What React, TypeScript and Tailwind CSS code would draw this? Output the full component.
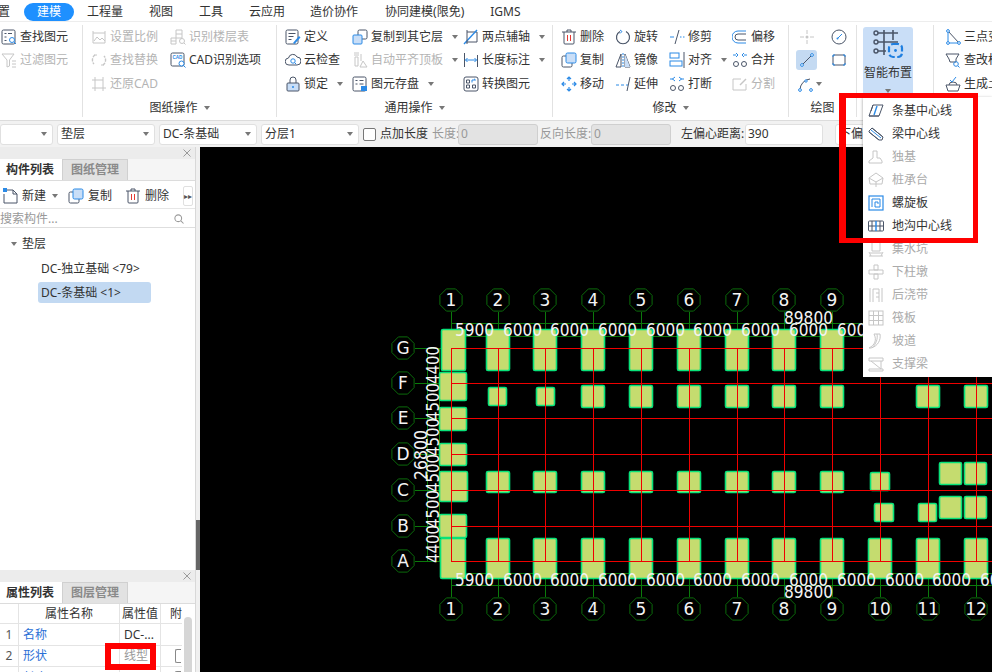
import type { ReactNode } from "react";

const G = "#4a5568";
const B = "#2b8ae6";
const L = "#c9def7";
const D = "#c6c6c6";

const ICONS: Record<string, ReactNode> = {
  find: (<><rect x="1" y="1" width="13" height="14" rx="1.5" stroke={G} /><path d="M3.5 4.5h2M7 4.5h4M3.5 8h2M3.5 11.5h2" stroke={G} /><circle cx="11" cy="11" r="2.5" stroke={B} fill="#fff" /><path d="M13 13l2 2" stroke={B} /></>),
  filter: (<><path d="M1 2h12L8.5 8v6L6 15V8z" stroke={D} /><path d="M11 9h4M11 12h4M11 15h4" stroke={D} /></>),
  scale: (<><path d="M2 2v12h12V2M2 4h12" stroke={D} /><path d="M3 12l3-4 3 3 2-2 3 3" stroke={D} /></>),
  replace: (<><path d="M4 3a6 6 0 0 0-1 9M12 13a6 6 0 0 0 1-9" stroke={D} strokeWidth="1.4" strokeDasharray="3 1" /><path d="M3 3h3M13 13h-3" stroke={D} /></>),
  restore: (<><path d="M4 1v14M1 12h14M12 1v11M4 4h8" stroke={D} /><path d="M1 4h3M12 15v-3" stroke={D} /></>),
  floor: (<><path d="M1 9h5v6H1zM6 1h6v8H6zM6 5h6M1 12h5" stroke={D} /><circle cx="12" cy="12" r="2.5" stroke={D} /><path d="M14 14l1.5 1.5" stroke={D} /></>),
  cad: (<><rect x="1" y="1" width="13" height="13" rx="1.5" stroke={G} /><text x="2.4" y="7" fontSize="4.6" fontWeight="700" fill={B} fontFamily="Liberation Sans">CAD</text><circle cx="11.5" cy="11.5" r="2.5" stroke={B} fill="#fff" /><path d="M13.5 13.5l2 2" stroke={B} /></>),
  define: (<><rect x="1" y="1" width="12" height="14" rx="1.5" stroke={G} /><path d="M3.5 4.5h7M3.5 7.5h5M3.5 10.5h3" stroke={G} /><path d="M8 14l6-7 1.5 1.5L9.5 15z" fill={B} /></>),
  cloud: (<><path d="M4 13a3.5 3.5 0 0 1-.5-7A4.500 4.500 0 0 1 12 5a4 4 0 0 1 0 8z" stroke={G} /><circle cx="8" cy="9" r="2.2" stroke={B} /><path d="M9.6 10.6l1.6 1.6" stroke={B} /></>),
  lock: (<><rect x="2" y="7" width="12" height="8" rx="1" stroke={G} fill={L} /><path d="M5 7V4a3 3 0 0 1 6 0v3" stroke={G} /><circle cx="8" cy="11" r="1" fill={B} /></>),
  copyto: (<><rect x="6" y="1" width="9" height="9" rx="1.5" stroke={G} fill="#fff" /><rect x="1" y="6" width="9" height="9" rx="1" stroke={B} fill={L} /></>),
  auto: (<><path d="M2 1h5M2 3h5M3 5h3v9H3zM9 2v7M8 15l3-6 4 6z" stroke={D} /></>),
  save: (<><rect x="1" y="1" width="13" height="14" rx="1.5" stroke={G} /><path d="M3.5 4.5h2M7.5 4.5h4M3.5 8h2M7.5 8h4" stroke={G} /><rect x="9" y="10" width="6" height="5" fill={B} /></>),
  axis: (<><path d="M4 3h10v10H3" stroke={G} /><path d="M1 15L14 1" stroke={B} strokeWidth="1.4" /><path d="M4 1v14" stroke={G} /></>),
  dim: (<><path d="M1.500 1v14M14.500 3v12" stroke={G} /><path d="M2.500 8h11M4.500 6l-2 2 2 2M11.500 6l2 2-2 2" stroke={B} /></>),
  convert: (<><rect x="1" y="1" width="14" height="14" rx="2" stroke={G} /><path d="M3.500 4h3v3h-3zM9.500 9h3v3h-3zM3.500 9h3v3h-3z" stroke={G} /><path d="M9 6.500V4h3.500M12.500 4L11 2.800" stroke={B} /></>),
  del: (<><path d="M1 3h14M6 3V1h4v2M3 3v11a1 1 0 0 0 1 1h8a1 1 0 0 0 1-1V3" stroke={G} /><path d="M6.500 6v6M9.500 6v6" stroke="#e53935" /></>),
  copy: (<><rect x="1" y="4" width="10" height="11" rx="1.5" stroke={G} /><rect x="5" y="1" width="10" height="10" rx="1.5" stroke={B} fill={L} /></>),
  move: (<><path d="M8 1v4M8 11v4M1 8h4M11 8h4M6 3l2-2 2 2M6 13l2 2 2-2M3 6L1 8l2 2M13 6l2 2-2 2" stroke={B} strokeWidth="1.2" /></>),
  rotate: (<><path d="M11 2.500A6.500 6.500 0 1 1 5 2.500" stroke={G} strokeWidth="1.2" /><path d="M5 1l2 1.500L5 4.500" stroke={B} /></>),
  mirror: (<><path d="M6 2L1 15h5zM10 2l5 13h-5z" stroke={G} /><path d="M10 2l5 13h-5z" fill={L} /><path d="M8 1v14" stroke={B} strokeDasharray="2 1" /></>),
  extend: (<><path d="M1 9h3M6 9h3M11 9h2" stroke={B} /><path d="M12 15l3-14" stroke={G} /></>),
  trim: (<><path d="M1 8h4M11 8h1.500M14 8h1.500" stroke={B} /><path d="M6 15L10 1" stroke={G} /></>),
  align: (<><rect x="1" y="1" width="9" height="5" stroke={B} /><rect x="1" y="9" width="12" height="5" stroke={B} /><path d="M15 0v16" stroke={G} /></>),
  break: (<><circle cx="4" cy="12" r="2.5" stroke={G} /><circle cx="12" cy="12" r="2.5" stroke={G} /><path d="M6 5L3.500 3 6 1M1 3h3M10 5l2.500-2L10 1M15 3h-3" stroke={B} /></>),
  offset: (<><path d="M14 2H6a5.500 5.500 0 0 0 0 12h8" stroke={B} /><path d="M14 5H6a3 3 0 0 0 0 6h8" stroke={G} /></>),
  merge: (<><circle cx="4" cy="12" r="2.5" stroke={G} /><circle cx="12" cy="12" r="2.5" stroke={G} /><path d="M1 3h3M4 1l2 2-2 2M15 3h-3M12 1l-2 2 2 2" stroke={B} /></>),
  split: (<><path d="M9 3H1v11h13V8" stroke={D} /><path d="M8 9l6-6" stroke={D} strokeWidth="1.5" /></>),
  point: (<><path d="M8 1v4M8 11v4M1 8h4M11 8h4" stroke={D} /><circle cx="8" cy="8" r="1.5" fill={D} /></>),
  gauge: (<><circle cx="8" cy="8" r="7" stroke={G} /><path d="M6.500 9.500L11 5" stroke={B} /><circle cx="6.500" cy="9.500" r="1" fill={B} /></>),
  line: (<><path d="M3 13L13 3" stroke={G} /><circle cx="3" cy="13" r="1.4" stroke={B} fill="#fff" /><circle cx="13" cy="3" r="1.4" stroke={B} fill="#fff" /></>),
  rect: (<><rect x="2" y="3" width="12" height="10" rx="1" stroke={G} /><path d="M2 5V3h2M12 3h2v2M2 11v2h2M12 13h2v-2" stroke={B} /></>),
  arc: (<><path d="M3 14A11 11 0 0 1 13 3" stroke={G} /><circle cx="3" cy="14" r="1.4" stroke={B} fill="#fff" /><circle cx="9" cy="5" r="1.2" stroke={B} fill="#fff" /><circle cx="14" cy="14" r="1.4" stroke={B} fill="#fff" /></>),
  tri: (<><path d="M3 2v12h11" stroke={B} /><path d="M3 2l11 12" stroke={G} /><circle cx="3" cy="2" r="1.4" fill="#fff" stroke={B} /><circle cx="3" cy="14" r="1.4" fill="#fff" stroke={B} /><circle cx="14" cy="14" r="1.4" fill="#fff" stroke={B} /></>),
  funnel: (<><path d="M1 2h13l-3 5v3H5L4 7z" stroke={G} /><circle cx="11" cy="12" r="2.3" stroke={B} /><path d="M13 14l1.500 1.500" stroke={B} /></>),
  gen: (<><path d="M1 9h14l-2 6H3z" stroke={G} /><path d="M4 9a4 3 0 0 1 8 0" stroke={G} /><path d="M5 4l2 2 4-5" stroke={B} /></>),
  newdoc: (<><path d="M4 2h7l4 4v9H2V6" stroke={G} /><path d="M11 2v4h4" stroke={G} /><rect x="1" y="0" width="4" height="4" fill={B} /></>),
  search: (<><circle cx="7" cy="7" r="4.500" stroke="#999" strokeWidth="1.4" /><path d="M10.500 10.500L14 14" stroke="#999" strokeWidth="1.4" /></>),
  mStrip: (<><path d="M5 2h10l-4 11H1z" stroke={G} /><path d="M1 13h10M5 2L3 8" stroke={G} /><path d="M9 3L6 12" stroke={B} strokeWidth="1.4" /></>),
  mBeam: (<><path d="M1 5l3-3 11 9-1 3h-3L1 6z" stroke={G} /><path d="M1 6l10 8M4 2l11 9" stroke={G} /><path d="M3 4l10 8" stroke={B} /></>),
  mBase: (<><path d="M5 2h4v7h3l2 3v2H1v-2l4-3z" stroke={D} /></>),
  mPile: (<><path d="M8 1l7 5-1 6H2L1 6z" stroke={D} /><path d="M1 6l7 4 7-4M8 10v5" stroke={D} /></>),
  mSpiral: (<><rect x="1" y="1" width="14" height="14" stroke={B} strokeWidth="1.2" /><path d="M4 12V4h8v8H7V7h3v2" stroke={B} /></>),
  mDitch: (<><rect x="0.500" y="3" width="15" height="10" rx="1" stroke={G} /><path d="M0.500 8h15M4 3v10M12 3v10" stroke={G} /><path d="M8 3v10" stroke={B} strokeWidth="1.5" /></>),
  mPit: (<><path d="M4 1v9h8V1M1 15h14M2 12h12" stroke={D} /><path d="M1 11l2 4M15 11l-2 4" stroke={D} /></>),
  mPier: (<><path d="M6 1h4v5h-4zM1 6h14v4H1zM6 10h4v5H6z" stroke={D} /></>),
  mBand: (<><path d="M2 1v14M14 1v14M5 2h6v13M5 2v13M8 6h3M8 10h3" stroke={D} /></>),
  mRaft: (<><rect x="1" y="1" width="14" height="14" stroke={D} /><path d="M1 5.500h14M1 10.500h14M5.500 1v14M10.500 1v14" stroke={D} /></>),
  mRamp: (<><path d="M6 1h6C13 7 10 13 3 15H1C7 12 9 7 6 1zM9 1c1 5-1 10-5 14" stroke={D} /></>),
  mBrace: (<><path d="M1 2h14v3H1zM3 5l10 8M13 5v8M1 13h14v2H1z" stroke={D} /></>),
};

function Ico({ name, size = 16 }: { name: string; size?: number }) {
  return (
    <svg width={size} height={size} viewBox="0 0 16 16" fill="none" className="shrink-0">
      {ICONS[name]}
    </svg>
  );
}

function Caret({ className = "ml-[6px]" }: { className?: string }) {
  return <span className={`inline-block h-0 w-0 shrink-0 border-x-[3px] border-t-[4px] border-x-transparent border-t-[#777] ${className}`} />;
}

function Item({ icon, label, off, caret }: { icon: string; label: string; off?: boolean; caret?: boolean }) {
  return (
    <div className={`flex h-[23.5px] items-center gap-[3px] whitespace-nowrap ${off ? "text-[#b4b4b4]" : "text-[#333]"}`}>
      <Ico name={icon} />
      <span>{label}</span>
      {caret && <Caret />}
    </div>
  );
}

function GroupTitle({ label, caret = true }: { label: string; caret?: boolean }) {
  return (
    <div className="mt-[1px] flex h-[22px] items-center justify-center text-[#333]">
      {label}
      {caret && <Caret className="ml-[6px]" />}
    </div>
  );
}

function Ribbon() {
  return (
    <div className="flex h-[98px] shrink-0 bg-white pt-[3px] text-[12px]">
      <div className="mb-[3px] w-[83px] shrink-0 border-r border-[#e2e2e2] pl-[1px]">
        <Item icon="find" label="查找图元" />
        <Item icon="filter" label="过滤图元" off />
      </div>

      <div className="mb-[3px] w-[194px] shrink-0 border-r border-[#e2e2e2]">
        <div className="flex h-[70.5px] pl-[8px]">
          <div className="w-[79px]">
            <Item icon="scale" label="设置比例" off />
            <Item icon="replace" label="查找替换" off />
            <Item icon="restore" label="还原CAD" off />
          </div>
          <div>
            <Item icon="floor" label="识别楼层表" off />
            <Item icon="cad" label="CAD识别选项" />
          </div>
        </div>
        <GroupTitle label="图纸操作" />
      </div>

      <div className="mb-[3px] w-[276px] shrink-0 border-r border-[#e2e2e2]">
        <div className="flex h-[70.5px] pl-[8px]">
          <div className="w-[67px]">
            <Item icon="define" label="定义" />
            <Item icon="cloud" label="云检查" />
            <Item icon="lock" label="锁定" caret />
          </div>
          <div className="w-[111px]">
            <Item icon="copyto" label="复制到其它层" caret />
            <Item icon="auto" label="自动平齐顶板" caret off />
            <Item icon="save" label="图元存盘" caret />
          </div>
          <div>
            <Item icon="axis" label="两点辅轴" caret />
            <Item icon="dim" label="长度标注" caret />
            <Item icon="convert" label="转换图元" />
          </div>
        </div>
        <GroupTitle label="通用操作" />
      </div>

      <div className="mb-[3px] w-[236px] shrink-0 border-r border-[#e2e2e2]">
        <div className="flex h-[70.5px] pl-[8px]">
          <div className="w-[54px]">
            <Item icon="del" label="删除" />
            <Item icon="copy" label="复制" />
            <Item icon="move" label="移动" />
          </div>
          <div className="w-[54px]">
            <Item icon="rotate" label="旋转" />
            <Item icon="mirror" label="镜像" />
            <Item icon="extend" label="延伸" />
          </div>
          <div className="w-[63px]">
            <Item icon="trim" label="修剪" />
            <Item icon="align" label="对齐" caret />
            <Item icon="break" label="打断" />
          </div>
          <div>
            <Item icon="offset" label="偏移" />
            <Item icon="merge" label="合并" />
            <Item icon="split" label="分割" off />
          </div>
        </div>
        <GroupTitle label="修改" />
      </div>

      <div className="mb-[3px] w-[68px] shrink-0 border-r border-[#e2e2e2]">
        <div className="grid h-[70.5px] grid-cols-[32px_32px] grid-rows-3 justify-center">
          <div className="flex items-center justify-center"><Ico name="point" /></div>
          <div className="flex items-center justify-center"><Ico name="gauge" /></div>
          <div className="flex items-center justify-center">
            <div className="flex h-[20px] w-[21px] items-center justify-center rounded-[3px] bg-[#c4daf2]"><Ico name="line" /></div>
          </div>
          <div className="flex items-center justify-center"><Ico name="rect" /></div>
          <div className="flex items-center justify-center gap-[3px] pl-[6px]"><Ico name="arc" /><Caret className="" /></div>
        </div>
        <GroupTitle label="绘图" caret={false} />
      </div>

      <div className="mb-[3px] w-[77px] shrink-0 border-r border-[#e2e2e2] pl-[6px]">
        <div className="mt-[2px] flex h-[70px] w-[50px] flex-col items-center rounded-[3px] bg-[#c9def7]">
          <svg width="32" height="32" viewBox="0 0 32 32" fill="none" className="mt-[2px]">
            <path d="M4 4h22M4 13h22M4 22h10M12 1v25M21 1v10" stroke={G} strokeWidth="1.6" />
            <circle cx="4" cy="4" r="2" fill="#c9def7" stroke={G} strokeWidth="1.4" />
            <circle cx="4" cy="13" r="2" fill="#c9def7" stroke={G} strokeWidth="1.4" />
            <circle cx="4" cy="22" r="2" fill="#c9def7" stroke={G} strokeWidth="1.4" />
            <rect x="17" y="15" width="13" height="13" rx="4" stroke="#1f7fe0" strokeWidth="2.2" strokeDasharray="6 2.5" />
            <circle cx="23.5" cy="21.5" r="1.4" fill="#1f7fe0" />
          </svg>
          <span className="mt-[3px] whitespace-nowrap text-[#333]">智能布置</span>
          <Caret className="mt-[7px]" />
        </div>
      </div>

      <div className="flex-1 overflow-hidden pl-[11px]">
        <Item icon="tri" label="三点变" />
        <Item icon="funnel" label="查改标" />
        <Item icon="gen" label="生成土" />
      </div>
    </div>
  );
}

function Select({ w, label }: { w: string; label?: string }) {
  return (
    <div className={`flex h-[21px] shrink-0 items-center justify-between rounded-[3px] border border-[#e0e0e0] bg-white pl-[3px] pr-[5px] text-[#333] ${w}`}>
      <span>{label}</span>
      <Caret className="" />
    </div>
  );
}

function Toolbar() {
  return (
    <div className="flex h-[27px] shrink-0 items-center overflow-hidden whitespace-nowrap border-t border-[#dcdcdc] bg-[#f2f2f2] text-[12px]">
      <div className="flex gap-[4px]">
        <Select w="w-[53px]" />
        <Select w="w-[98px]" label="垫层" />
        <Select w="w-[98px]" label="DC-条基础" />
        <Select w="w-[98px]" label="分层1" />
      </div>
      <span className="ml-[4px] h-[13px] w-[13px] shrink-0 rounded-[2px] border border-[#777] bg-white" />
      <span className="ml-[4px] w-[49px] shrink-0 text-[#333]">点加长度</span>
      <span className="ml-[3px] w-[26px] shrink-0 text-[#999]">长度:</span>
      <div className="flex h-[21px] w-[80px] shrink-0 items-center rounded-[3px] border border-[#cfcfcf] bg-[#e3e3e3] pl-[2px] text-[#999]">0</div>
      <span className="ml-[2px] w-[51px] shrink-0 text-[#999]">反向长度:</span>
      <div className="flex h-[21px] w-[80px] shrink-0 items-center rounded-[3px] border border-[#cfcfcf] bg-[#e3e3e3] pl-[2px] text-[#999]">0</div>
      <span className="ml-[10px] w-[64px] shrink-0 text-[#333]">左偏心距离:</span>
      <div className="flex h-[21px] w-[78px] shrink-0 items-center rounded-[3px] border border-[#e0e0e0] bg-white pl-[2px] text-[#333]">390</div>
      <div className="ml-[12px] flex h-[21px] w-[120px] shrink-0 items-center rounded-[3px] border border-[#e0e0e0] bg-white pl-[3px] text-[#333]">下偏心距离</div>
    </div>
  );
}

function CloseBar() {
  return (
    <div className="flex h-[12px] shrink-0 items-center justify-end bg-[#ececec] pr-[4px]">
      <svg width="8" height="8" viewBox="0 0 8 8"><path d="M0.5 0.5l7 7M7.5 0.5l-7 7" stroke="#9a9a9a" /></svg>
    </div>
  );
}

function PanelTabs({ a, b }: { a: string; b: string }) {
  return (
    <div className="flex h-[22px] shrink-0 border-b border-[#dcdcdc] bg-[#f5f5f5] text-[12px]">
      <div className="flex w-[62px] items-center bg-white pl-[6px] font-bold text-[#333]">{a}</div>
      <div className="flex w-[66px] items-center justify-center border border-b-0 border-[#d0d0d0] bg-[#e2e2e2] font-bold text-[#8a8a8a]">{b}</div>
    </div>
  );
}

function LeftPanel() {
  return (
    <div className="flex w-[196px] shrink-0 flex-col border-r border-[#d8d8d8] bg-white text-[12px]">
      <div className="flex min-h-0 flex-1 flex-col">
        <CloseBar />
        <PanelTabs a="构件列表" b="图纸管理" />
        <div className="flex h-[28px] shrink-0 items-center border-b border-[#e6e6e6] pl-[2px] pt-[2px] text-[#333]">
          <Ico name="newdoc" />
          <span className="ml-[4px]">新建</span>
          <Caret className="ml-[6px]" />
          <span className="ml-[10px]"><Ico name="copy" /></span>
          <span className="ml-[4px]">复制</span>
          <span className="ml-[13px]"><Ico name="del" /></span>
          <span className="ml-[4px]">删除</span>
          <span className="ml-[14px] flex h-[20px] w-[10px] items-center justify-center rounded-[2px] border border-[#e0e0e0] text-[8px] text-[#555]">▸▸</span>
        </div>
        <div className="flex h-[19px] shrink-0 items-center justify-between border-b border-[#dedede] pr-[10px] pt-[2px] text-[#999]">
          <span>搜索构件...</span>
          <Ico name="search" size={12} />
        </div>
        <div className="flex items-center pl-[11px] pt-[7px] text-[#333]">
          <Caret className="mr-[5px]" />
          <span className="leading-[18px]">垫层</span>
        </div>
        <div className="mt-[7px] pl-[41px] leading-[18px] text-[#333]">DC-独立基础 &lt;79&gt;</div>
        <div className="ml-[38px] mt-[4px] flex h-[21px] w-[113px] items-center rounded-[3px] bg-[#c2d9f2] pl-[3px] text-[#333]">DC-条基础 &lt;1&gt;</div>
      </div>

      <div className="relative flex h-[102px] shrink-0 flex-col overflow-hidden">
        <CloseBar />
        <PanelTabs a="属性列表" b="图层管理" />
        <div className="grid grid-cols-[19px_101px_41px_21px] grid-rows-[20px_22px_21px_21px] text-[#333]">
          <div className="border-b border-r border-[#e4e4e4]" />
          <div className="flex items-center justify-center border-b border-r border-[#e4e4e4]">属性名称</div>
          <div className="flex items-center justify-center border-b border-r border-[#e4e4e4]">属性值</div>
          <div className="flex items-center border-b border-[#e4e4e4] pl-[9px]">附</div>

          <div className="flex items-center justify-center border-b border-r border-[#e4e4e4] text-[#555]">1</div>
          <div className="flex items-center border-b border-r border-[#e4e4e4] pl-[4px] text-[#2b6fd6]">名称</div>
          <div className="flex items-center border-b border-r border-[#e4e4e4] pl-[4px]">DC-...</div>
          <div className="border-b border-[#e4e4e4]" />

          <div className="flex items-center justify-center border-b border-r border-[#e4e4e4] text-[#555]">2</div>
          <div className="flex items-center border-b border-r border-[#e4e4e4] pl-[4px] text-[#2b6fd6]">形状</div>
          <div className="flex items-center border-b border-r border-[#e4e4e4] pl-[4px] text-[#999]">线型</div>
          <div className="flex items-center border-b border-[#e4e4e4] pl-[14px]"><span className="h-[14px] w-[6px] rounded-l-[2px] border border-r-0 border-[#888]" /></div>

          <div className="flex items-center justify-center border-r border-[#e4e4e4] text-[#555]">3</div>
          <div className="flex items-center border-r border-[#e4e4e4] pl-[4px] text-[#2b6fd6]">长度</div>
          <div className="border-r border-[#e4e4e4]" />
          <div className="flex items-center pl-[14px]"><span className="h-[14px] w-[6px] rounded-l-[2px] border border-r-0 border-[#888]" /></div>
        </div>
        <div className="absolute right-[3px] top-[47px] h-[60px] w-[8px] rounded-full bg-[#d6d6d6]" />
        <div className="absolute left-[105px] top-[73px] h-[27px] w-[51px] border-[6px] border-[#ff0000]" />
      </div>
    </div>
  );
}

const COLS = [451, 498, 545, 593, 641, 689, 737, 784, 832, 880, 928, 976];
const ROWS: [string, number][] = [["G", 348], ["F", 383], ["E", 418], ["D", 454], ["C", 490], ["B", 526], ["A", 561]];
const DIM_X = [455, 503, 550, 598, 646, 693, 741, 789, 837, 885, 932, 980];
const V_DIMS: [string, number][] = [["4400", 384], ["4500", 421], ["4500", 456], ["4500", 492], ["4500", 528], ["4400", 563]];

// x1, y1, x2, y2 of each footing
const FOOTINGS: number[][] = [
  [441, 329, 466, 371], [439, 372, 467, 401], [439, 407, 467, 431], [439, 443, 467, 466],
  [439, 471, 468, 502], [439, 514, 467, 538], [440, 538, 466, 579],
  ...[1, 2, 3, 4, 5, 6, 7, 8].flatMap((i) => [
    [COLS[i] - 12, 329, COLS[i] + 12, 371],
    [COLS[i] - 12, 471, COLS[i] + 12, 493],
  ]),
  ...[1, 2, 3, 4, 5, 6, 7, 8, 9, 10, 11].map((i) => [COLS[i] - 12, 538, COLS[i] + 12, 579]),
  [488, 387, 507, 406], [536, 387, 555, 406],
  ...[3, 4, 5, 6, 7, 8, 10, 11].map((i) => [COLS[i] - 12, 385, COLS[i] + 12, 408]),
  [870, 472, 890, 491], [874, 503, 894, 522], [918, 503, 937, 522],
  [939, 462, 962, 485], [964, 462, 987, 485], [939, 496, 962, 519], [964, 496, 987, 519],
];

function bubble(cx: number, cy: number) {
  const pts = Array.from({ length: 8 }, (_, i) => {
    const a = (Math.PI / 4) * i + Math.PI / 8;
    return `${(cx + 12 * Math.cos(a)).toFixed(1)},${(cy + 12 * Math.sin(a)).toFixed(1)}`;
  }).join(" ");
  return <polygon points={pts} fill="#000" stroke="#0b6b0b" />;
}

function Canvas() {
  const textCls = "fill-[#f4f4f4] text-[17px]";
  const font = "'DejaVu Sans', sans-serif";
  return (
    <svg width="792" height="525" viewBox="200 147 792 525" className="block bg-black" fontFamily={font}>
      {/* axis stubs and dimension lines */}
      <g stroke="#0b7a0b" fill="none">
        {COLS.map((x) => <path key={x} d={`M${x}.5 312V348M${x}.5 561V597`} />)}
        {ROWS.map(([n, y]) => <path key={n} d={`M415 ${y}.5H451`} />)}
        <path d="M451 323.5H992M451 336.5H992M451 573.5H992M451 585.5H992M427.5 348V561M439.5 348V561" />
      </g>

      {FOOTINGS.map((f, i) => (
        <rect key={i} x={f[0] + 0.5} y={f[1] + 0.5} width={f[2] - f[0] - 1} height={f[3] - f[1] - 1} rx="1.5" fill="#c5dc6f" stroke="#08e27a" strokeWidth="1.6" />
      ))}

      <g stroke="#f00000" fill="none">
        {COLS.map((x) => <path key={x} d={`M${x}.5 348V561`} />)}
        {ROWS.map(([n, y]) => <path key={n} d={`M451 ${y}.5H992`} />)}
      </g>

      {COLS.map((x, i) => (
        <g key={x}>
          {bubble(x, 300)}
          {bubble(x, 609)}
          <text x={x} y={306} textAnchor="middle" className={textCls}>{i + 1}</text>
          <text x={x} y={615} textAnchor="middle" className={textCls}>{i + 1}</text>
        </g>
      ))}
      {ROWS.map(([n, y]) => (
        <g key={n}>
          {bubble(403, y)}
          <text x={403} y={y + 6} textAnchor="middle" className={textCls}>{n}</text>
        </g>
      ))}

      {DIM_X.map((x, i) => {
        const label = i === 0 ? "5900" : "6000";
        return (
          <g key={x}>
            <text x={x} y={336} textLength={39} lengthAdjust="spacingAndGlyphs" className={textCls}>{label}</text>
            <text x={x} y={586} textLength={39} lengthAdjust="spacingAndGlyphs" className={textCls}>{label}</text>
          </g>
        );
      })}
      <text x={784} y={324} textLength={49} lengthAdjust="spacingAndGlyphs" className={textCls}>89800</text>
      <text x={784} y={598} textLength={49} lengthAdjust="spacingAndGlyphs" className={textCls}>89800</text>

      {V_DIMS.map(([t, y], i) => (
        <text key={i} transform={`translate(439 ${y}) rotate(-90)`} textLength={38} lengthAdjust="spacingAndGlyphs" className={textCls}>{t}</text>
      ))}
      <text transform="translate(427 480) rotate(-90)" textLength={50} lengthAdjust="spacingAndGlyphs" className={textCls}>26800</text>
    </svg>
  );
}

const MENU: [string, string, boolean][] = [
  ["mStrip", "条基中心线", true],
  ["mBeam", "梁中心线", true],
  ["mBase", "独基", false],
  ["mPile", "桩承台", false],
  ["mSpiral", "螺旋板", true],
  ["mDitch", "地沟中心线", true],
  ["mPit", "集水坑", false],
  ["mPier", "下柱墩", false],
  ["mBand", "后浇带", false],
  ["mRaft", "筏板", false],
  ["mRamp", "坡道", false],
  ["mBrace", "支撑梁", false],
];

export default function App() {
  return (
    <div className="relative flex h-[672px] w-[992px] flex-col overflow-hidden bg-white font-['Noto_Sans','Noto_Sans_CJK_SC',sans-serif] text-[12px]">
      <div className="flex h-[22px] shrink-0 items-center border-b border-[#ededed] pt-[2px] text-[12px] text-[#333]">
        <span className="ml-[-2px]">置</span>
        <span className="ml-[14px] flex h-[18px] w-[50px] items-center justify-center rounded-full bg-[#1e90ff] text-white">建模</span>
        <span className="ml-[13px]">工程量</span>
        <span className="ml-[26px]">视图</span>
        <span className="ml-[26px]">工具</span>
        <span className="ml-[26px]">云应用</span>
        <span className="ml-[25px]">造价协作</span>
        <span className="ml-[27px]">协同建模(限免)</span>
        <span className="ml-[26px]">IGMS</span>
      </div>
      <Ribbon />
      <Toolbar />
      <div className="flex min-h-0 flex-1">
        <LeftPanel />
        <div className="w-[4px] shrink-0 bg-[#f0f0f0]">
          <div className="mt-[373px] h-[50px] bg-[#666]" />
        </div>
        <Canvas />
      </div>

      {/* dropdown of 智能布置 */}
      <div className="absolute left-[863px] top-[97px] h-[280px] w-[129px] bg-white pt-[2px] shadow-[0_1px_3px_rgba(0,0,0,0.4)]">
        {MENU.map(([icon, label, on]) => (
          <div key={label} className={`flex h-[23px] items-center gap-[8px] pl-[5px] ${on ? "text-[#333]" : "text-[#aaa]"}`}>
            <Ico name={icon} />
            <span>{label}</span>
          </div>
        ))}
      </div>
      <div className="absolute left-[839px] top-[93px] h-[150px] w-[139px] border-y-[5px] border-l-[7px] border-r-[5px] border-[#ff0000]" />
    </div>
  );
}
